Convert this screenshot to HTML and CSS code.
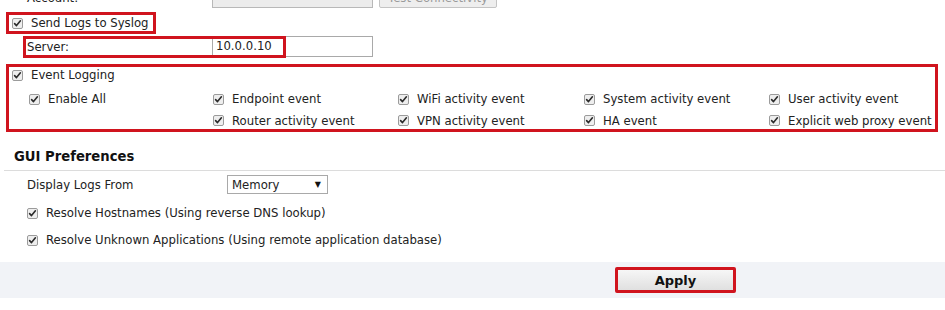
FILE: index.html
```html
<!DOCTYPE html>
<html lang="en">
<head>
    <meta charset="UTF-8">
    <title>Log Settings</title>
    <link rel="stylesheet" href="styles.css">
</head>
<body>
    <div class="page">
        <div class="form-row top-row">
            <span class="field-label">Account:</span>
            <span class="text-input disabled"></span>
            <button class="plain-button" disabled>Test Connectivity</button>
        </div>

        <div class="mark syslog-toggle">
            <span class="cb"><svg viewBox="0 0 11 11"><rect x="0.5" y="0.5" width="10" height="10" rx="1.5"/><path d="M2.6 5.6 L4.5 7.6 L8.4 2.8"/></svg></span>
            <span>Send Logs to Syslog</span>
        </div>

        <div class="form-row server-row">
            <span class="field-label">Server:</span>
            <span class="text-input">10.0.0.10</span>
            <span class="mark-overlay server-mark"></span>
        </div>

        <div class="mark event-box">
            <div class="check-item event-head">
                <span class="cb"><svg viewBox="0 0 11 11"><rect x="0.5" y="0.5" width="10" height="10" rx="1.5"/><path d="M2.6 5.6 L4.5 7.6 L8.4 2.8"/></svg></span>
                <span>Event Logging</span>
            </div>
            <div class="event-grid">
                <div class="check-item"><span class="cb"><svg viewBox="0 0 11 11"><rect x="0.5" y="0.5" width="10" height="10" rx="1.5"/><path d="M2.6 5.6 L4.5 7.6 L8.4 2.8"/></svg></span>Enable All</div>
                <div class="check-item"><span class="cb"><svg viewBox="0 0 11 11"><rect x="0.5" y="0.5" width="10" height="10" rx="1.5"/><path d="M2.6 5.6 L4.5 7.6 L8.4 2.8"/></svg></span>Endpoint event</div>
                <div class="check-item"><span class="cb"><svg viewBox="0 0 11 11"><rect x="0.5" y="0.5" width="10" height="10" rx="1.5"/><path d="M2.6 5.6 L4.5 7.6 L8.4 2.8"/></svg></span>WiFi activity event</div>
                <div class="check-item"><span class="cb"><svg viewBox="0 0 11 11"><rect x="0.5" y="0.5" width="10" height="10" rx="1.5"/><path d="M2.6 5.6 L4.5 7.6 L8.4 2.8"/></svg></span>System activity event</div>
                <div class="check-item"><span class="cb"><svg viewBox="0 0 11 11"><rect x="0.5" y="0.5" width="10" height="10" rx="1.5"/><path d="M2.6 5.6 L4.5 7.6 L8.4 2.8"/></svg></span>User activity event</div>

                <div></div>
                <div class="check-item"><span class="cb"><svg viewBox="0 0 11 11"><rect x="0.5" y="0.5" width="10" height="10" rx="1.5"/><path d="M2.6 5.6 L4.5 7.6 L8.4 2.8"/></svg></span>Router activity event</div>
                <div class="check-item"><span class="cb"><svg viewBox="0 0 11 11"><rect x="0.5" y="0.5" width="10" height="10" rx="1.5"/><path d="M2.6 5.6 L4.5 7.6 L8.4 2.8"/></svg></span>VPN activity event</div>
                <div class="check-item"><span class="cb"><svg viewBox="0 0 11 11"><rect x="0.5" y="0.5" width="10" height="10" rx="1.5"/><path d="M2.6 5.6 L4.5 7.6 L8.4 2.8"/></svg></span>HA event</div>
                <div class="check-item"><span class="cb"><svg viewBox="0 0 11 11"><rect x="0.5" y="0.5" width="10" height="10" rx="1.5"/><path d="M2.6 5.6 L4.5 7.6 L8.4 2.8"/></svg></span>Explicit web proxy event</div>
            </div>
        </div>

        <h2 class="section-title">GUI Preferences</h2>

        <div class="form-row display-row">
            <span class="field-label">Display Logs From</span>
            <span class="select-box">Memory<span class="select-arrow">&#9660;</span></span>
        </div>

        <div class="check-item pref-item">
            <span class="cb"><svg viewBox="0 0 11 11"><rect x="0.5" y="0.5" width="10" height="10" rx="1.5"/><path d="M2.6 5.6 L4.5 7.6 L8.4 2.8"/></svg></span>
            <span>Resolve Hostnames (Using reverse DNS lookup)</span>
        </div>
        <div class="check-item pref-item">
            <span class="cb"><svg viewBox="0 0 11 11"><rect x="0.5" y="0.5" width="10" height="10" rx="1.5"/><path d="M2.6 5.6 L4.5 7.6 L8.4 2.8"/></svg></span>
            <span>Resolve Unknown Applications (Using remote application database)</span>
        </div>

        <div class="footer-bar">
            <button class="apply-button">Apply</button>
        </div>
    </div>
</body>
</html>
```

FILE: styles.css
```css
:root {
    --mark-red: #d0141e;
    --text: #222222;
    --border: #a9a9a9;
}

body {
    margin: 0;
    padding: 0;
    background: #ffffff;
    color: var(--text);
    font-family: "DejaVu Sans", Verdana, sans-serif;
    font-size: 11.7px;
    overflow: hidden;
}

.page {
    width: 945px;
    height: 310px;
    overflow: hidden;
}

.form-row {
    display: flex;
    align-items: center;
    position: relative;
}

.field-label {
    width: 212px;
    box-sizing: border-box;
    padding-left: 27px;
    flex: none;
}

.top-row {
    height: 21px;
    margin-top: -13px;
}

.text-input {
    width: 161px;
    height: 21px;
    box-sizing: border-box;
    border: 1px solid var(--border);
    background: #ffffff;
    padding: 2px 3px;
    line-height: 15px;
}

.text-input.disabled {
    background: #ececec;
    border-color: #b8b8b8;
}

.plain-button {
    margin-left: 6px;
    width: 118px;
    height: 21px;
    border: 1px solid #c4c4c4;
    border-radius: 2px;
    background: #eeeeee;
    color: #9a9a9a;
    font-family: inherit;
    font-size: 11.7px;
    line-height: 12px;
    padding: 0;
}

.mark {
    border: 3px solid var(--mark-red);
}

.syslog-toggle {
    display: inline-flex;
    align-items: center;
    margin: 4px 0 0 6px;
    height: 16px;
    padding: 0 4px 0 3px;
    gap: 8px;
}

.server-row {
    height: 21px;
    margin-top: 2px;
}

.server-row .field-label {
    padding-left: 4px;
    margin-left: 23px;
    width: 189px;
}

.mark-overlay {
    position: absolute;
    border: 3px solid var(--mark-red);
    pointer-events: none;
}

.server-mark {
    left: 23px;
    top: 0;
    width: 257px;
    height: 16px;
}

.cb {
    width: 11px;
    height: 11px;
    flex: none;
    display: inline-block;
}

.cb svg {
    display: block;
    width: 11px;
    height: 11px;
}

.cb rect {
    fill: #eeeeee;
    stroke: #9b9b9b;
    stroke-width: 1;
}

.cb path {
    fill: none;
    stroke: #2b2b2b;
    stroke-width: 1.6;
    stroke-linecap: round;
    stroke-linejoin: round;
}

.check-item {
    display: flex;
    align-items: center;
    gap: 8px;
}

.event-box {
    margin: 7px 7px 0 6px;
    height: 62px;
    padding: 0 0 0 3px;
}

.event-head {
    height: 16px;
}

.event-grid {
    display: grid;
    grid-template-columns: 184px 185px 186px 185px auto;
    grid-template-rows: 22px 21px;
    margin-top: 5px;
    padding-left: 17px;
}

.section-title {
    margin: 16px 0 0 4px;
    padding: 0 0 4px 10px;
    font-size: 13.2px;
    font-weight: bold;
    color: #111111;
    line-height: 18px;
    border-bottom: 1px solid #dcdcdc;
}

.display-row {
    height: 19px;
    margin-top: 4px;
}

.display-row .field-label {
    width: 227px;
}

.select-box {
    width: 101px;
    height: 19px;
    box-sizing: border-box;
    border: 1px solid var(--border);
    display: flex;
    align-items: center;
    justify-content: space-between;
    padding: 0 6px 0 4px;
}

.select-arrow {
    font-size: 8px;
    color: #111111;
}

.pref-item {
    padding-left: 27px;
    height: 18px;
    margin-top: 10px;
}

.pref-item + .pref-item {
    margin-top: 9px;
}

.footer-bar {
    margin-top: 13px;
    height: 36px;
    box-sizing: border-box;
    background: #f1f3f7;
    padding: 5px 0 0 615px;
}

.apply-button {
    width: 121px;
    height: 26px;
    border: 3px solid var(--mark-red);
    border-radius: 2px;
    background: linear-gradient(#f6f6f6, #e0e0e0);
    font-family: inherit;
    font-size: 13px;
    font-weight: bold;
    color: #111111;
    padding: 0;
}
```
